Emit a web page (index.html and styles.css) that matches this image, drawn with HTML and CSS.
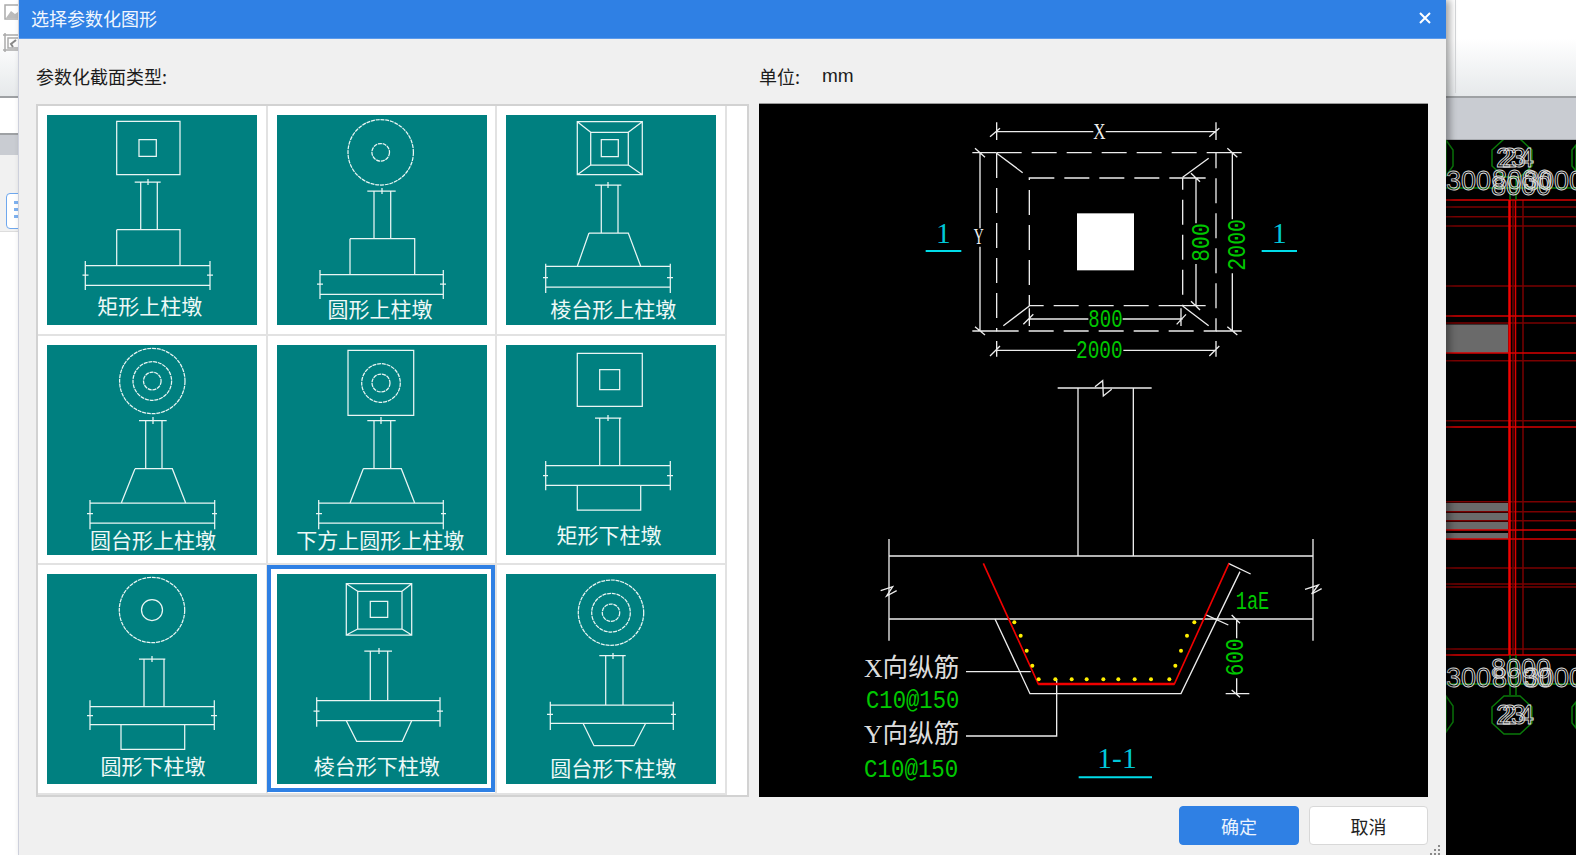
FILE: index.html
```html
<!DOCTYPE html>
<html lang="zh-CN">
<head>
<meta charset="utf-8">
<title>选择参数化图形</title>
<link rel="stylesheet" href="styles.css">
</head>
<body>
<div class="app">
  <header class="ribbon">
    <div class="ribbon-icons">
      <svg class="ribbon-icon" width="18" height="56" viewBox="0 0 18 56"><rect x="5" y="5" width="16" height="14" fill="#fff" stroke="#aaa" stroke-width="1.5"/><path d="M6 18l5-7 4 3 3-2 3 6z" fill="#bbb"/><path d="M5 33v19M3 35h18M3 50h18M8 38h12v10H8z" fill="none" stroke="#aaa" stroke-width="1.5"/><path d="M16 40l-5 4 2 3" fill="none" stroke="#888" stroke-width="2"/></svg>
    </div>
    <div class="ribbon-sep"></div>
  </header>
  <div class="workspace">
    <aside class="sidebar">
      <div class="side-white"></div>
      <div class="side-strip"></div>
      <div class="side-gap"></div>
      <div class="side-tool"><span class="side-button"><svg width="27" height="33" viewBox="0 0 27 33"><path class="side-dots" d="M7 7h5v3H7zM7 14h5v3H7zM7 21h5v3H7z"/></svg></span></div>
    </aside>
    <main class="main">
      <div class="main-strip"></div>
      <svg class="cad" width="1516" height="715" viewBox="60 140 1516 715">
        <g class="r-dark">
          <path d="M1446 207H1576M1446 216.7H1576M1446 226H1576M1446 286H1576M1446 323H1576M1446 360.7H1576M1446 420.7H1576M1446 501.7H1576M1446 511.7H1576M1446 520.7H1576M1446 568H1576M1446 584H1576M1446 587H1576M1446 649H1576M1513 200V655M1523 200V655"/>
        </g>
        <g class="gray-blocks">
          <rect x="1446" y="324.5" width="62" height="28.5"/>
          <rect x="1446" y="503" width="62" height="8"/>
          <rect x="1446" y="513" width="62" height="7"/>
          <rect x="1446" y="522" width="62" height="8"/>
          <rect x="1446" y="533" width="62" height="6"/>
        </g>
        <g class="r-bright">
          <path d="M1446 200H1576M1446 316H1576M1446 353H1576M1446 427H1576M1446 530H1576M1446 539H1576M1446 655H1576M1515.5 200V655"/>
          <path class="r-thick" d="M1509.5 200V655"/>
        </g>
        <g class="cad-green">
          <path d="M1446 188H1576M1446 684H1576M1510 178V200M1516 178V200M1510 655V695M1516 655V695"/>
          <polygon points="1520,139 1532,150 1532,166 1520,177 1504,177 1492,166 1492,150 1504,139"/>
          <polygon points="1520,696 1532,707 1532,723 1520,734 1504,734 1492,723 1492,707 1504,696"/>
          <polygon points="1446,140 1453,150 1453,166 1446,176"/>
          <polygon points="1446,696 1453,706 1453,722 1446,732"/>
          <polygon points="1576,145 1572,150 1572,166 1576,171"/>
          <polygon points="1576,702 1572,707 1572,723 1576,728"/>
        </g>
        <g class="cad-text">
          <text x="1496" y="167">2</text><text x="1502" y="167">2</text><text x="1511" y="167">3</text><text x="1519" y="167">4</text>
          <text x="1446" y="190">300</text><text x="1492" y="189">8000</text><text x="1491" y="195">8000</text><text x="1524" y="190">3000</text>
          <text x="1496" y="724">2</text><text x="1502" y="724">2</text><text x="1511" y="724">3</text><text x="1519" y="724">4</text>
          <text x="1446" y="687">300</text><text x="1492" y="687">8000</text><text x="1491" y="678">8000</text><text x="1524" y="687">3000</text>
        </g>
      </svg>
    </main>
  </div>
</div>

<section class="dialog">
  <div class="titlebar">
    <span class="title">选择参数化图形</span>
    <svg class="close" width="12" height="12" viewBox="0 0 12 12"><path d="M1 1l10 10M11 1L1 11"/></svg>
  </div>
  <div class="dialog-body">
    <div class="col">
      <div class="col-head">参数化截面类型:</div>
      <div class="list">
        <div class="grid">

          <div class="cell"><svg class="thumb" width="210" height="210" viewBox="0 0 210 210">
            <path d="M69.7 6.3H133V59.7H69.7zM92 24.7h17.3V41.3H92zM87.7 67h26M93.7 67V114.7M110.3 67V114.7M101 64v6M69.7 114.7H133V150.7M69.7 114.7V150.7M38.3 150.7H163M38.3 170.3H163M38.3 146V175M163 146V175M35.5 160h6M160 160h6"/>
            <text x="102.7" y="198.5">矩形上柱墩</text>
          </svg></div>

          <div class="cell"><svg class="thumb" width="210" height="210" viewBox="0 0 210 210">
            <circle class="dash" cx="103.7" cy="37.3" r="32.7"/><circle class="dash" cx="103.7" cy="37.3" r="8.8"/>
            <path d="M90.3 76h28.4M97 76V123.7M113.7 76V123.7M105 73v6M73 123.7H137.7V159.7M73 123.7V159.7M43 159.7H166.3M43 179.3H166.3M43 155V184M166.3 155V184M40 169h6M163 169h6"/>
            <text x="103" y="201.5">圆形上柱墩</text>
          </svg></div>

          <div class="cell"><svg class="thumb" width="210" height="210" viewBox="0 0 210 210">
            <path d="M71.3 6.7H136.3V59.7H71.3zM84.7 17.3H122.3V50H84.7zM95.3 24.7H112.3V41.7H95.3zM71.3 6.7L84.7 17.3M136.3 6.7L122.3 17.3M71.3 59.7L84.7 50M136.3 59.7L122.3 50M89 70H115.3M95.3 70V118M112 70V118M102 67v6M83 118H122.3L134.7 151.3M83 118L71.3 151.3M39.7 151.3H164.3M39.7 172H164.3M39.7 148.7V178M164.3 148.7V178M37 162.7h5M161 162.7h6"/>
            <text x="107.3" y="201.5">棱台形上柱墩</text>
          </svg></div>

          <div class="cell"><svg class="thumb" width="210" height="210" viewBox="0 0 210 210">
            <circle class="dash" cx="105.3" cy="36" r="32.7"/><circle class="dash" cx="105.3" cy="36" r="19.3"/><circle class="dash" cx="105.3" cy="36" r="8.8"/>
            <path d="M92 75.7H119.7M98.7 75.7V123.7M115 75.7V123.7M106 72v7M88 123.7H125.3L138.7 158M88 123.7L74.3 158M43 158H167.7M43 178H167.7M43 155V184.3M167.7 155V184.3M40 168.7h6M165 168.7h5"/>
            <text x="106" y="203">圆台形上柱墩</text>
          </svg></div>

          <div class="cell"><svg class="thumb" width="210" height="210" viewBox="0 0 210 210">
            <path d="M71 5.3H136.7V70.3H71z"/><circle class="dash" cx="104" cy="38" r="19.3"/><circle class="dash" cx="104" cy="38" r="9"/>
            <path d="M90.3 75.7H118.7M97 75.7V123.7M113.7 75.7V123.7M104 72v7M86.3 123.7H124.3L137.7 158M86.3 123.7L73 158M41.7 158H166.3M41.7 178H166.3M41.7 155V184.3M166.3 155V184.3M39 168.7h6M164 168.7h5"/>
            <text x="103.3" y="203">下方上圆形上柱墩</text>
          </svg></div>

          <div class="cell"><svg class="thumb" width="210" height="210" viewBox="0 0 210 210">
            <path d="M71.3 8.3H136.3V61.3H71.3zM93.7 24.7H113.7V44.7H93.7zM89 73H115.3M93.7 73V120.7M113.7 73V120.7M102 70v6M39.7 120.7H164.3M39.7 140.3H164.3M39.7 116V145.3M164.3 116V145.3M37 130.7h5M161 130.7h6M71.3 140.3V165H134.7V140.3"/>
            <text x="103" y="197.5">矩形下柱墩</text>
          </svg></div>

          <div class="cell"><svg class="thumb" width="210" height="210" viewBox="0 0 210 210">
            <circle class="dash" cx="105" cy="36" r="32.7"/><circle class="solid" cx="105" cy="36" r="10.5"/>
            <path d="M92 85H118.3M97 85V132.7M117 85V132.7M105 82v6M43 132.7H167.3M43 150.7H167.3M43 126.3V156M167.3 126.3V156M40 141.7h6M164 141.7h6M74 150.7V175.3H137.7V150.7"/>
            <text x="106" y="200">圆形下柱墩</text>
          </svg></div>

          <div class="cell is-selected"><svg class="thumb" width="210" height="210" viewBox="0 0 210 210">
            <path d="M69.3 9.7H134.7V61H69.3zM80.7 17.3H125V55H80.7zM93.3 27.3H110.7V43.3H93.3zM69.3 9.7L80.7 17.3M134.7 9.7L125 17.3M69.3 61L80.7 55M134.7 61L125 55M87.3 77H115M93.3 77V126.7M110.7 77V126.7M102 74v6M39.7 126.7H163M39.7 146.7H163M39.7 123.3V152.7M163 123.3V152.7M36.5 137h6M160 137h6M69.3 146.7L79.7 167.3H125.3L134.7 146.7"/>
            <text x="99.7" y="200">棱台形下柱墩</text>
          </svg></div>

          <div class="cell"><svg class="thumb" width="210" height="210" viewBox="0 0 210 210">
            <circle class="dash" cx="105" cy="38.7" r="32.7"/><circle class="dash" cx="105" cy="38.7" r="19.3"/><circle class="dash" cx="105" cy="38.7" r="8.7"/>
            <path d="M93.3 81.7H119.7M99.7 81.7V131M117 81.7V131M107 79v6M44.3 131H167.3M44.3 149.3H167.3M44.3 127.7V156M167.3 127.7V156M41 140.3h6M165 140.3h5M77 149.3L88 171.7H128L139.7 149.3"/>
            <text x="107.3" y="201.8">圆台形下柱墩</text>
          </svg></div>

        </div>
      </div>
    </div>

    <div class="col">
      <div class="col-head unit"><span>单位:</span><span class="unit-value">mm</span></div>
      <svg class="preview" width="669" height="694" viewBox="759 104 669 693">
        <g transform="translate(760 60) scale(0.33333)">
          <g class="ln">
            <path d="M710 215H1000M1037 215H1368M710 187V240M1368 187V240M690 230L720 205M1348 230L1378 205"/>
            <path class="ln-dash" d="M710 278H1368V813H710Z"/>
            <path class="ln-dash" d="M808 354H1268V737H808Z"/>
            <path d="M710 280L788 338M1268 352L1346 295M730 797L808 738M1268 738L1346 797"/>
            <path d="M637 278H710M637 813H710M660 278V505M660 560V813M645 265L675 292M645 800L675 825"/>
            <path d="M1368 278H1445M1368 813H1445M1417 278V478M1417 640V813M1402 265L1432 292M1402 800L1432 825"/>
            <path d="M1268 354H1337M1268 737H1337M1308 354V490M1308 612V737M1293 340L1320 365M1293 724L1320 750"/>
            <path d="M808 777H985M1088 777H1268M808 745V798M1263 745V798M790 793L820 763M1250 793L1278 763"/>
            <path d="M710 871H948M1090 871H1368M710 843V890M1368 843V890M690 888L720 858M1348 888L1378 858"/>
          </g>
          <rect class="white-fill" x="951" y="460" width="171" height="171"/>
          <text class="serif-w" x="1000" y="238" textLength="37" lengthAdjust="spacingAndGlyphs">X</text>
          <text class="serif-w" x="641" y="553" textLength="30" lengthAdjust="spacingAndGlyphs">Y</text>
          <text class="mono-g" x="985" y="801" textLength="103" lengthAdjust="spacingAndGlyphs">800</text>
          <text class="mono-g" x="948" y="895" textLength="140" lengthAdjust="spacingAndGlyphs">2000</text>
          <g transform="translate(1320 548) rotate(-90)"><text class="mono-g" x="-57" y="26" textLength="115" lengthAdjust="spacingAndGlyphs">800</text></g>
          <g transform="translate(1428 555) rotate(-90)"><text class="mono-g" x="-77" y="26" textLength="155" lengthAdjust="spacingAndGlyphs">2000</text></g>
          <path class="cyan-bar" d="M497 573H604M1505 573H1611"/>
          <text class="serif-c" x="550" y="550" text-anchor="middle">1</text>
          <text class="serif-c" x="1558" y="550" text-anchor="middle">1</text>
        </g>
        <g transform="translate(840 370) scale(0.33333)">
          <g class="ln">
            <path d="M653 54H935M714 54V558M880 54V558M765 50L788 32L790 78L815 58"/>
            <path d="M147 558H1419M147 747H1419M147 507V812M1419 507V812"/>
            <path d="M122 662L158 650L140 678L170 662M1395 658L1435 645L1415 672L1445 656"/>
            <path d="M465 747L570 971H1023L1200 605M1165 580L1232 612M1095 733L1165 765"/>
            <path d="M1190 748V805M1190 925V971M1157 971H1228M1175 960L1200 982M1175 735L1200 760"/>
            <path d="M378 905H572M378 1098H650V928"/>
          </g>
          <path class="rebar" d="M430 580L595 942H1003L1167 580"/>
          <path class="rebar-thick" d="M595 942H1003"/>
          <g class="bar-dots">
            <circle cx="523" cy="757" r="6"/><circle cx="542" cy="797" r="6"/><circle cx="560" cy="842" r="6"/><circle cx="577" cy="887" r="6"/><circle cx="596" cy="928" r="6"/><circle cx="646" cy="928" r="6"/><circle cx="695" cy="928" r="6"/><circle cx="740" cy="928" r="6"/><circle cx="790" cy="928" r="6"/><circle cx="835" cy="928" r="6"/><circle cx="884" cy="928" r="6"/><circle cx="933" cy="928" r="6"/><circle cx="988" cy="928" r="6"/><circle cx="1006" cy="887" r="6"/><circle cx="1023" cy="842" r="6"/><circle cx="1041" cy="797" r="6"/><circle cx="1063" cy="757" r="6"/>
          </g>
          <text class="cn-w" x="72" y="920">X向纵筋</text>
          <text class="cn-w" x="72" y="1118">Y向纵筋</text>
          <text class="mono-g" x="78" y="1014" textLength="280" lengthAdjust="spacingAndGlyphs">C10@150</text>
          <text class="mono-g" x="72" y="1220" textLength="283" lengthAdjust="spacingAndGlyphs">C10@150</text>
          <text class="mono-g" x="1187" y="718" textLength="101" lengthAdjust="spacingAndGlyphs">1aE</text>
          <g transform="translate(1183 862) rotate(-90)"><text class="mono-g" x="-56" y="26" textLength="112" lengthAdjust="spacingAndGlyphs">600</text></g>
          <text class="serif-c" x="772" y="1195" textLength="118" lengthAdjust="spacingAndGlyphs">1-1</text>
          <path class="cyan-bar" d="M716 1222H936"/>
        </g>
      </svg>
    </div>
  </div>
  <div class="footer">
    <button class="btn btn-primary" type="button">确定</button>
    <button class="btn btn-cancel" type="button">取消</button>
  </div>
  <svg class="grip" width="12" height="10" viewBox="0 0 12 10"><path d="M9 0h2v2H9zM5 4h2v2H5zM9 4h2v2H9zM1 8h2v2H1zM5 8h2v2H5zM9 8h2v2H9z"/></svg>
</section>
</body>
</html>
```

FILE: styles.css
```css
* { box-sizing: border-box; }
html, body { margin: 0; padding: 0; height: 100%; overflow: hidden; background: #000; }
body { position: relative; width: 1576px; height: 855px; font-family: "Noto Sans CJK SC", "Liberation Sans", sans-serif; }

.app { display: flex; flex-direction: column; height: 855px; }

.ribbon { height: 98px; display: flex; background: linear-gradient(#fff 40%, #e6e9eb); border-bottom: 2px solid #9ea1a4; }
.ribbon-icons { width: 1455px; }
.ribbon-icon { display: block; }
.ribbon-sep { width: 1px; height: 93px; background: #d6d8da; }

.workspace { display: flex; flex: 1; min-height: 0; }

.sidebar { width: 60px; display: flex; flex-direction: column; background: #fff; }
.side-white { height: 37px; background: #fff; border-bottom: 2px solid #9ea1a4; }
.side-strip { height: 20px; background: #c9ccd2; }
.side-gap { height: 33px; background: #f1f1f1; }
.side-tool { height: 44px; padding: 5px 0 0 6px; background: #f1f1f1; border-bottom: 1px solid #ddd; }
.side-button { display: block; width: 30px; height: 36px; background: #fff; border: 1.5px solid #6fa8ee; border-radius: 4px; }
.side-button svg { display: block; }
.side-dots { fill: #7fb2f0; }

.main { flex: 1; display: flex; flex-direction: column; min-width: 0; }
.main-strip { height: 42px; background: #c9ccd2; border-bottom: 1px solid #a8abb0; }

.cad { display: block; background: #000; }
.cad path, .cad polygon { fill: none; }
.r-dark path { stroke: #7a0000; stroke-width: 1.5; }
.r-bright path { stroke: #d80000; stroke-width: 1.5; }
.r-bright .r-thick { stroke: #f00000; stroke-width: 2.5; }
.gray-blocks rect { fill: #6a6a6a; }
.cad-green path, .cad-green polygon { stroke: #0a7a0a; stroke-width: 1.5; }
.cad-text text { font: 300 27px "Liberation Sans", sans-serif; fill: none; stroke: #dcdcdc; stroke-width: 0.9; }

.dialog { position: absolute; left: 18px; top: 0; width: 1428px; height: 855px; display: flex; flex-direction: column; background: #f0f0f0; border-left: 1px solid #cdd0dc; box-shadow: 4px 0 7px rgba(0, 0, 0, 0.35); }

.titlebar { height: 39px; flex: none; display: flex; align-items: center; justify-content: space-between; padding: 0 15px 2px 12px; background: #2f80e4; border-bottom: 1px solid #5b9aeb; }
.title { font-size: 18px; line-height: 20px; color: #f0f6fe; }
.close path { fill: none; stroke: #fff; stroke-width: 2; }

.dialog-body { display: flex; gap: 10px; padding-left: 17px; flex: none; }
.col { display: flex; flex-direction: column; }
.col-head { height: 65px; padding-top: 25px; font-size: 18px; line-height: 24px; color: #1c1c1c; }
.unit { display: flex; gap: 22px; margin-bottom: -1px; }
.unit-value { font-family: "Liberation Sans", sans-serif; font-size: 19px; }

.list { width: 713px; height: 693px; background: #fff; border: 2px solid #d2d2d2; }
.grid { display: grid; grid-template-columns: repeat(3, 229.5px); grid-template-rows: repeat(3, 229.5px); }
.cell { position: relative; padding: 9px 0 0 9px; border-right: 2px solid #e2e2e2; border-bottom: 2px solid #e2e2e2; }
.is-selected::after { content: ""; box-sizing: border-box; position: absolute; left: -0.5px; top: 0; width: 228px; height: 227px; border: 4.5px solid #2f80e4; }

.thumb { display: block; background: #008080; }
.thumb path, .thumb circle { fill: none; stroke: #e9f6f4; stroke-width: 1.25; }
.thumb .dash { stroke-dasharray: 4 0.8; }
.thumb text { font-family: "Noto Sans CJK SC", sans-serif; font-size: 21px; font-weight: 400; fill: #eef9f7; text-anchor: middle; }

.preview { display: block; background: #000; border-top: 1px solid #999; }
.ln path { fill: none; stroke: #ececec; stroke-width: 4; }
.ln .ln-dash { stroke-dasharray: 75 30; }
.white-fill { fill: #fff; }
.serif-w { font-family: "Liberation Serif", serif; font-size: 70px; fill: #eee; }
.serif-c { font-family: "Liberation Serif", serif; font-size: 88px; fill: #00c8d8; }
.mono-g { font-family: "Liberation Mono", monospace; font-size: 80px; fill: #00c800; }
.cn-w { font-family: "Liberation Serif", "Noto Sans CJK SC", serif; font-size: 77px; fill: #dcdcdc; }
.cyan-bar { fill: none; stroke: #00dce8; stroke-width: 6; }
.rebar { fill: none; stroke: #f00000; stroke-width: 5; }
.rebar-thick { fill: none; stroke: #f00000; stroke-width: 8; }
.bar-dots circle { fill: #ffef00; }

.footer { display: flex; justify-content: flex-end; gap: 10px; padding: 9px 18px 0 0; }
.btn { width: 120px; height: 39px; padding: 0; font: 18px "Noto Sans CJK SC", sans-serif; color: #222; background: #fff; border: 1px solid #d8d8d8; border-radius: 4px; }
.btn-cancel { width: 119px; }
.btn-primary { color: #eaf3fe; background: #2f80e4; border-color: #2f80e4; }

.grip { position: absolute; right: 5px; bottom: 0; }
.grip path { fill: #8a8a8a; }
```
